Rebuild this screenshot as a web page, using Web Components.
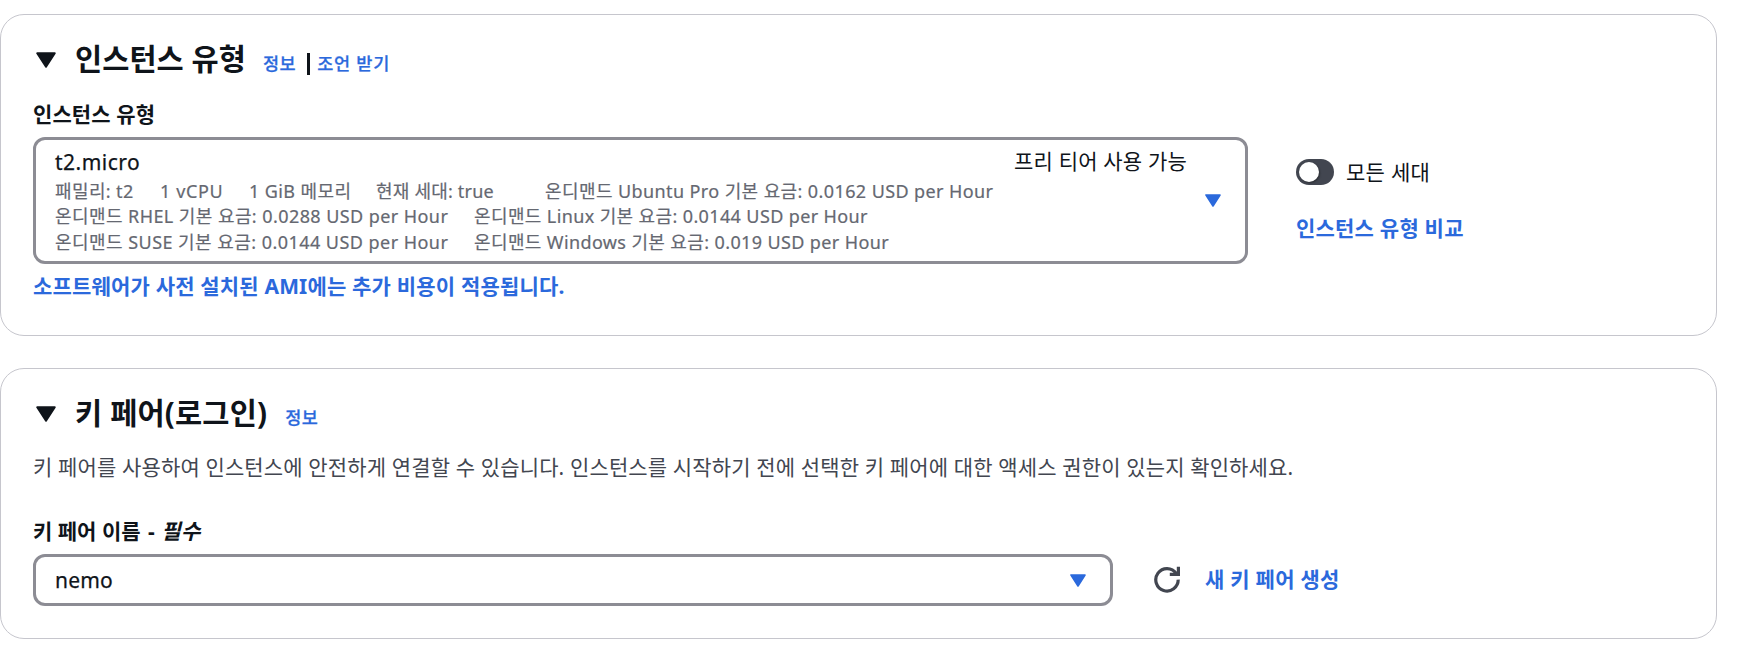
<!DOCTYPE html>
<html lang="ko">
<head>
<meta charset="utf-8">
<title>인스턴스 시작</title>
<style>
  body { margin: 0; background: #fff; color: #0f141a; font-family: "Noto Sans", "Noto Sans CJK KR", sans-serif; }
</style>
</head>
<body>
<launch-page></launch-page>
<script>
const define = (name, html) => {
  const tpl = document.createElement('template');
  tpl.innerHTML = html;
  customElements.define(name, class extends HTMLElement {
    constructor() {
      super();
      this.attachShadow({ mode: 'open' }).append(tpl.content.cloneNode(true));
    }
  });
};

/* Single line of text: size, weight and tracking come from custom properties */
define('ui-text', `
<style>
  :host { display: block; white-space: nowrap; line-height: 24px; font-size: 21px; letter-spacing: var(--ls, 0); }
</style><slot></slot>`);

define('ui-link', `
<style>
  :host { display: block; white-space: nowrap; color: #2b69dc; font-size: 21px; font-weight: 700; line-height: 24px; letter-spacing: var(--ls, 0); }
  a { color: inherit; text-decoration: none; cursor: pointer; }
</style><a><slot></slot></a>`);

define('ui-caret', `
<style>
  :host { display: block; flex: none; width: 16px; height: 13px; color: #2b69dc; }
  svg { display: block; width: 100%; height: 100%; }
</style>
<svg viewBox="0 0 16 13" preserveAspectRatio="none"><path d="M1 1h14L8 12z" fill="currentColor" stroke="currentColor" stroke-width="1.6" stroke-linejoin="round"/></svg>`);

define('ui-panel', `
<style>
  :host { display: block; box-sizing: border-box; width: 1717px; border: 1px solid #c6c6cd; border-radius: 24px; padding: 23px 32px 0; }
  header { display: flex; height: 41px; align-items: center; }
  ui-caret { width: 20px; height: 16px; margin: 3px 19px 0 3px; color: #0f141a; }
  h2 { margin: 0; font-size: 29.5px; line-height: 41px; font-weight: 700; letter-spacing: var(--title-ls, .2px); white-space: nowrap; }
  .info { display: flex; align-items: center; margin: 8px 0 0 17px; -webkit-text-stroke: .25px; }
</style>
<header><ui-caret></ui-caret><h2><slot name="title"></slot></h2><div class="info"><slot name="info"></slot></div></header>
<slot></slot>`);

define('ui-select', `
<style>
  :host { display: flex; box-sizing: border-box; border: 3px solid #8c8c94; border-radius: 12px; background: #fff; padding: 0 24px 0 19px; align-items: center; }
  .value { flex: 1; min-width: 0; }
</style>
<div class="value"><slot></slot></div><ui-caret></ui-caret>`);

define('ui-toggle', `
<style>
  :host { display: flex; align-items: center; gap: 12px; }
  .track { box-sizing: border-box; width: 38px; height: 26px; border-radius: 13px; background: #424650; padding: 3px; }
  .knob { width: 20px; height: 20px; border-radius: 50%; background: #fff; box-shadow: 1px 1px 2px rgba(0,0,0,.35); }
</style>
<div class="track"><div class="knob"></div></div><slot></slot>`);

define('ui-refresh', `
<style>
  :host { display: block; width: 27px; height: 27px; }
  svg { display: block; }
</style>
<svg width="27" height="27" viewBox="0 0 27 27" fill="none" stroke="#424650" stroke-width="3.2"><path d="M24.2 13.6A11.2 11.2 0 1 1 22.2 7.4M24.4 .8V8.4H15.8"/></svg>`);

define('instance-details', `
<style>
  :host { display: block; padding-top: 3px; }
  .top { display: flex; justify-content: space-between; padding-right: 18px; }
  .name { -webkit-text-stroke: .25px; --ls: .49px; margin-top: 1px; }
  .rows { padding-top: 5px; }
  .row { display: flex; color: #656871; -webkit-text-stroke: .2px; }
  .row ui-text { font-size: 18px; line-height: 25.2px; }
</style>
<div class="top"><ui-text class="name">t2.micro</ui-text><ui-text style="--ls:.18px">프리 티어 사용 가능</ui-text></div>
<div class="rows">
<div class="row">
  <ui-text style="--ls:.386px;width:105px">패밀리: t2</ui-text>
  <ui-text style="--ls:.6px;width:89px">1 vCPU</ui-text>
  <ui-text style="--ls:.4px;width:127px">1 GiB 메모리</ui-text>
  <ui-text style="--ls:.2px;width:169px">현재 세대: true</ui-text>
  <ui-text style="--ls:.4px">온디맨드 Ubuntu Pro 기본 요금: 0.0162 USD per Hour</ui-text>
</div>
<div class="row">
  <ui-text style="--ls:.425px;width:419px">온디맨드 RHEL 기본 요금: 0.0288 USD per Hour</ui-text>
  <ui-text style="--ls:.38px">온디맨드 Linux 기본 요금: 0.0144 USD per Hour</ui-text>
</div>
<div class="row">
  <ui-text style="--ls:.455px;width:419px">온디맨드 SUSE 기본 요금: 0.0144 USD per Hour</ui-text>
  <ui-text style="--ls:.38px">온디맨드 Windows 기본 요금: 0.019 USD per Hour</ui-text>
</div>
</div>`);

define('instance-type-panel', `
<style>
  :host { display: block; }
  ui-panel { height: 322px; --title-ls: .06px; }
  .small { font-size: 17.5px; font-weight: 500; }
  .bar { width: 3px; height: 22px; background: #0f141a; margin: 2px 7px 0 11px; }
  .label { font-weight: 700; margin-top: 23px; --ls: .1px; }
  .body { display: flex; margin-top: 11px; }
  ui-select { width: 1215px; height: 127px; }
  aside { margin-left: 48px; padding-top: 22px; }
  aside ui-link { margin-top: 31px; }
  .note { margin-top: 10px; }
</style>
<ui-panel>
  <span slot="title">인스턴스 유형</span>
  <ui-link slot="info" class="small" style="--ls:.5px">정보</ui-link>
  <div slot="info" class="bar"></div>
  <ui-link slot="info" class="small" style="--ls:.788px">조언 받기</ui-link>
  <ui-text class="label">인스턴스 유형</ui-text>
  <div class="body">
    <ui-select><instance-details></instance-details></ui-select>
    <aside>
      <ui-toggle><ui-text style="--ls:.3px">모든 세대</ui-text></ui-toggle>
      <ui-link style="--ls:.22px">인스턴스 유형 비교</ui-link>
    </aside>
  </div>
  <ui-link class="note" style="--ls:.18px">소프트웨어가 사전 설치된 AMI에는 추가 비용이 적용됩니다.</ui-link>
</ui-panel>`);

define('key-pair-panel', `
<style>
  :host { display: block; }
  ui-panel { height: 271px; --title-ls: .186px; }
  .small { font-size: 17.5px; font-weight: 500; margin-left: 1px; }
  .desc { color: #424650; margin-top: 22px; --ls: .137px; }
  .label { font-weight: 700; margin-top: 40px; --ls: 0; }
  .label span { margin: 0 1px 0 2px; }
  .label i { letter-spacing: .6px; }
  .body { display: flex; align-items: center; margin-top: 11px; }
  ui-select { width: 1080px; height: 52px; }
  .value { -webkit-text-stroke: .25px; --ls: .18px; }
  ui-refresh { margin: -2px 24px 0 41px; }
  .create { margin-top: -2px; --ls: .253px; }
</style>
<ui-panel>
  <span slot="title">키 페어(로그인)</span>
  <ui-link slot="info" class="small" style="--ls:.4px">정보</ui-link>
  <ui-text class="desc">키 페어를 사용하여 인스턴스에 안전하게 연결할 수 있습니다. 인스턴스를 시작하기 전에 선택한 키 페어에 대한 액세스 권한이 있는지 확인하세요.</ui-text>
  <ui-text class="label">키 페어 이름 <span>-</span> <i>필수</i></ui-text>
  <div class="body">
    <ui-select><ui-text class="value">nemo</ui-text></ui-select>
    <ui-refresh></ui-refresh>
    <ui-link class="create">새 키 페어 생성</ui-link>
  </div>
</ui-panel>`);

define('launch-page', `
<style>
  :host { display: flex; flex-direction: column; gap: 32px; padding-top: 14px; }
</style>
<instance-type-panel></instance-type-panel>
<key-pair-panel></key-pair-panel>`);
</script>
</body>
</html>
